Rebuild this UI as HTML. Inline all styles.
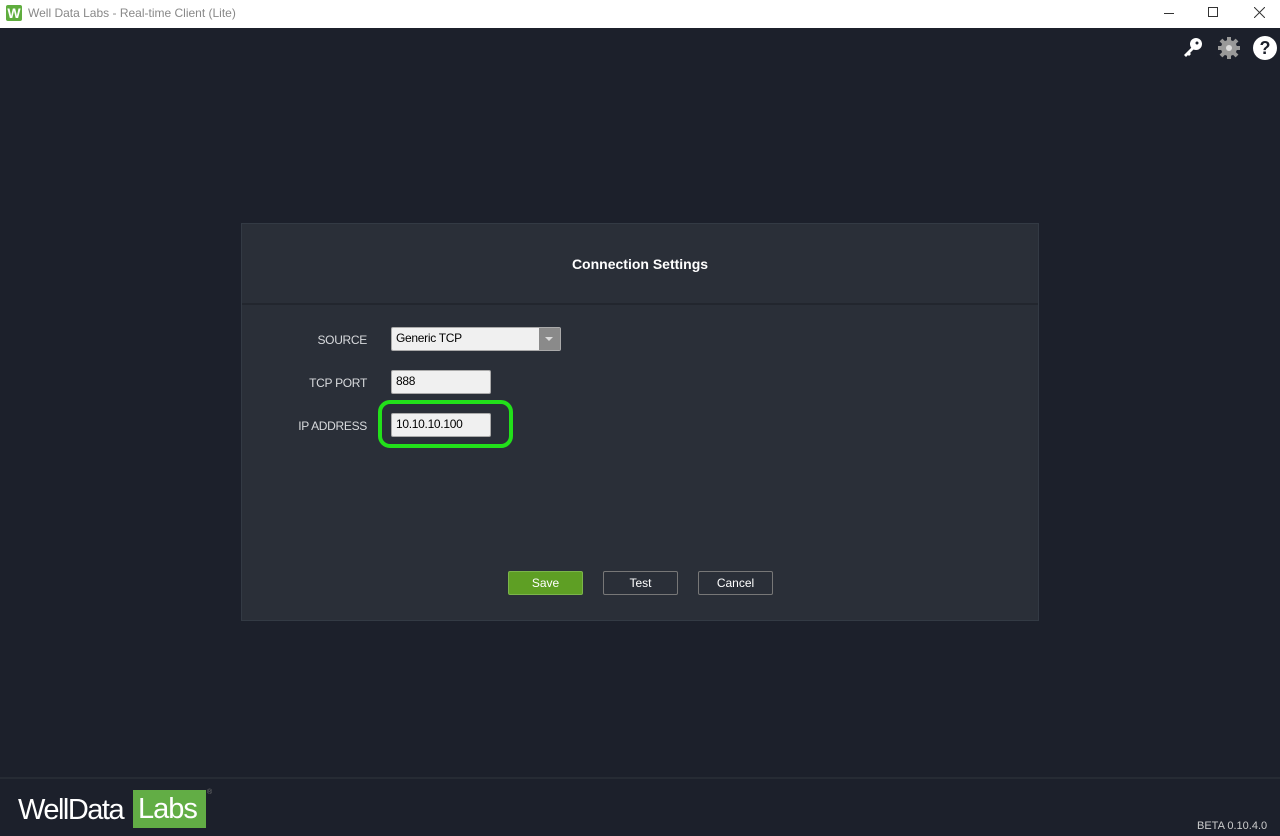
<!DOCTYPE html>
<html><head><style>
*{margin:0;padding:0;box-sizing:border-box}
body{width:1280px;height:836px;background:#1c202b;font-family:"Liberation Sans",sans-serif;position:relative;overflow:hidden}
.tb{position:absolute;left:0;top:0;width:1280px;height:28px;background:#fff}
.tb .ic{position:absolute;left:6px;top:5px;width:16px;height:16px;background:#5fad3e;border-radius:2px;color:#fff;font-weight:bold;font-size:14px;line-height:16px;text-align:center}
.tb .t{position:absolute;left:28px;top:6px;font-size:12px;color:#888}
.panel{position:absolute;left:241px;top:223px;width:798px;height:398px;background:#2a2f38;border:1px solid #333a44}
.hdr{height:81px;border-bottom:2px solid #22262e;text-align:center;line-height:81px;color:#fff;font-weight:bold;font-size:14px}
.lbl{position:absolute;color:#d8dadd;font-size:12px;text-align:right;width:100px;letter-spacing:-0.3px}
.inp{position:absolute;background:#f0f0f0;border:1px solid #aaa;border-radius:2px;font-size:12px;color:#000;padding-left:4px;line-height:21px;height:24px;letter-spacing:-0.3px}
.btn{position:absolute;top:347px;width:75px;height:24px;border:1px solid #777;border-radius:2px;color:#fff;font-size:12px;text-align:center;line-height:22px;background:#2a2f38}
.foot{position:absolute;left:0;top:777px;width:1280px;height:2px;background:#262b34}
</style></head><body>
<div class="tb"><div class="ic">W</div><div class="t">Well Data Labs - Real-time Client (Lite)</div>
<div style="position:absolute;left:1164px;top:13px;width:10px;height:1px;background:#333"></div>
<div style="position:absolute;left:1208px;top:7px;width:10px;height:10px;border:1px solid #333"></div>
<svg style="position:absolute;left:1254px;top:7px" width="11" height="11"><path d="M0 0L11 11M11 0L0 11" stroke="#333" stroke-width="1"/></svg></div>
<svg style="position:absolute;left:1182px;top:37px" width="22" height="22" viewBox="0 0 22 22"><circle cx="14" cy="7" r="6" fill="#fff"/><circle cx="15" cy="6" r="1.5" fill="#1c202b"/><path d="M10 10 L2 18 L4 20 L6 18 L7 19 L9 17 L8 16 L12 12Z" fill="#fff"/></svg>
<svg style="position:absolute;left:1217px;top:36px" width="24" height="24" viewBox="0 0 24 24"><g fill="#999"><circle cx="12" cy="12" r="8"/><g stroke="#999" stroke-width="4"><line x1="12" y1="1" x2="12" y2="23"/><line x1="1" y1="12" x2="23" y2="12"/><line x1="4" y1="4" x2="20" y2="20"/><line x1="20" y1="4" x2="4" y2="20"/></g></g><circle cx="12" cy="12" r="3" fill="#ddd"/></svg>
<div style="position:absolute;left:1253px;top:36px;width:24px;height:24px;border-radius:50%;background:#fff;color:#1c202b;font-weight:bold;font-size:18px;text-align:center;line-height:24px">?</div>
<div class="panel">
<div class="hdr">Connection Settings</div>
<div class="lbl" style="left:25px;top:109px">SOURCE</div>
<div class="inp" style="left:149px;top:103px;width:170px">Generic TCP<div style="position:absolute;right:0;top:0;width:21px;height:22px;background:#8a8a8a"><div style="position:absolute;left:6px;top:9px;border-left:4px solid transparent;border-right:4px solid transparent;border-top:4px solid #ddd"></div></div></div>
<div class="lbl" style="left:25px;top:152px">TCP PORT</div>
<div class="inp" style="left:149px;top:146px;width:100px">888</div>
<div class="lbl" style="left:25px;top:195px">IP ADDRESS</div>
<div style="position:absolute;left:136px;top:176px;width:135px;height:48px;border:4px solid #22e01a;border-radius:12px"></div>
<div class="inp" style="left:149px;top:189px;width:100px">10.10.10.100</div>
<div class="btn" style="left:266px;background:#5e9f24;border-color:#7bb54a">Save</div>
<div class="btn" style="left:361px">Test</div>
<div class="btn" style="left:456px">Cancel</div>
</div>
<div class="foot"></div>
<div style="position:absolute;left:18px;top:790px;color:#fff;font-size:29px;letter-spacing:-1.5px;line-height:40px">WellData</div>
<div style="position:absolute;left:133px;top:790px;width:73px;height:38px;background:#62ad45;color:#fff;font-size:29px;letter-spacing:-1px;line-height:38px;padding-left:5px">Labs</div>
<div style="position:absolute;left:207px;top:789px;color:#777;font-size:7px">®</div>
<div style="position:absolute;left:1197px;top:820px;color:#ccc;font-size:11px">BETA 0.10.4.0</div>
</body></html>
